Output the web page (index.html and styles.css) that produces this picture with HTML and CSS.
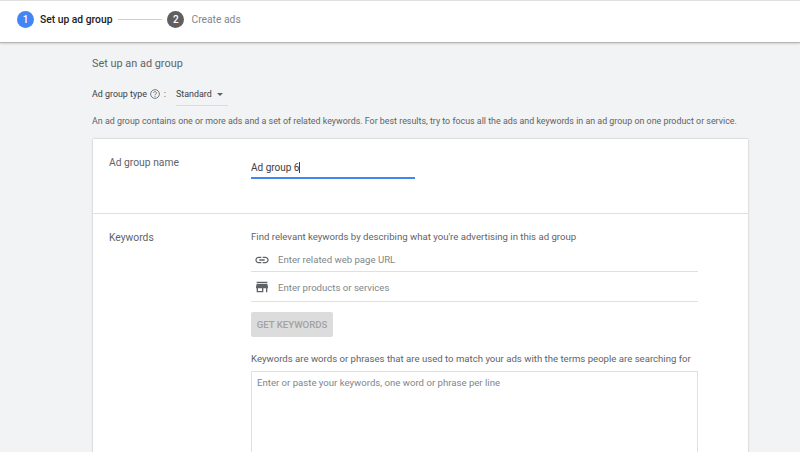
FILE: index.html
```html
<!DOCTYPE html>
<html lang="en">
<head>
<meta charset="utf-8">
<title>Set up ad group</title>
<link rel="stylesheet" href="styles.css">
</head>
<body>
<header class="stepper">
  <span class="step-num step-active">1</span>
  <span class="step-label step-label-active">Set up ad group</span>
  <span class="step-line"></span>
  <span class="step-num step-next">2</span>
  <span class="step-label">Create ads</span>
</header>
<main class="content">
  <h1 class="title">Set up an ad group</h1>
  <div class="type-row">
    <span class="type-label">Ad group type</span>
    <svg class="help" viewBox="0 0 24 24" width="10" height="10"><circle cx="12" cy="12" r="10.5" fill="none" stroke="#5f6368" stroke-width="2"/><path d="M8.6 9.5a3.4 3.4 0 1 1 5.6 2.6c-1.3 1-2.2 1.6-2.2 3.2" fill="none" stroke="#5f6368" stroke-width="2"/><rect x="11" y="17" width="2" height="2" fill="#5f6368"/></svg>
    <span class="colon">:</span>
    <span class="select"><span>Standard</span><span class="caret"></span></span>
  </div>
  <p class="desc">An ad group contains one or more ads and a set of related keywords. For best results, try to focus all the ads and keywords in an ad group on one product or service.</p>
  <section class="card">
    <div class="row row-name">
      <div class="row-label">Ad group name</div>
      <div class="name-field"><span class="name-value">Ad group 6</span><span class="cursor"></span></div>
    </div>
    <div class="row row-keywords">
      <div class="row-label">Keywords</div>
      <div class="kw-body">
        <p class="kw-text">Find relevant keywords by describing what you're advertising in this ad group</p>
        <div class="kw-input kw-url">
          <svg viewBox="0 0 24 24" width="16" height="16"><path fill="#5f6368" d="M3.9 12c0-1.71 1.39-3.1 3.1-3.1h4V7H7c-2.76 0-5 2.24-5 5s2.24 5 5 5h4v-1.9H7c-1.71 0-3.1-1.39-3.1-3.1zM8 13h8v-2H8v2zm9-6h-4v1.9h4c1.71 0 3.1 1.39 3.1 3.1s-1.39 3.1-3.1 3.1h-4V17h4c2.76 0 5-2.24 5-5s-2.24-5-5-5z"/></svg>
          <span>Enter related web page URL</span>
        </div>
        <div class="kw-input kw-prod">
          <svg viewBox="0 0 24 24" width="16" height="16"><path fill="#5f6368" d="M20 4H4v2h16V4zm1 10v-2l-1-5H4l-1 5v2h1v6h10v-6h4v6h2v-6h1zm-9 4H6v-4h6v4z"/></svg>
          <span>Enter products or services</span>
        </div>
        <div class="btn-disabled">GET KEYWORDS</div>
        <p class="kw-text kw-hint">Keywords are words or phrases that are used to match your ads with the terms people are searching for</p>
        <div class="textarea">Enter or paste your keywords, one word or phrase per line</div>
      </div>
    </div>
  </section>
</main>
</body>
</html>
```
FILE: styles.css
```css
html, body {
  margin: 0;
  height: 452px;
  overflow: hidden;
}
body {
  background: #f1f3f4;
  font-family: Roboto, "Liberation Sans", sans-serif;
  color: #5f6368;
  font-size: 10px;
}
.stepper {
  box-sizing: border-box;
  height: 43px;
  background: #fff;
  display: flex;
  align-items: center;
  padding: 0 0 4px 17px;
  border-top: 1px solid #e0e0e0;
  border-bottom: 1px solid #b4b4b4;
  box-shadow: 0 1px 2px rgba(0,0,0,.15);
}
.step-num {
  width: 17px;
  height: 17px;
  border-radius: 50%;
  color: #fff;
  font-size: 10px;
  font-weight: 500;
  display: flex;
  align-items: center;
  justify-content: center;
}
.step-active { background: #4285f4; }
.step-next { background: #5f5f5f; margin-right: 7px; }
.step-label { font-size: 10.3px; color: #80868b; }
.step-label-active { color: #202124; font-weight: 500; margin-left: 6px; }
.step-line {
  width: 44px;
  height: 1px;
  background: #cfcfcf;
  margin: 0 5px 0 6px;
}
.content {
  width: 655px;
  margin-left: 93px;
}
.title {
  margin: 14px 0 0 -1px;
  font-size: 10.9px;
  line-height: 14px;
  font-weight: 400;
  color: #5f6368;
}
.type-row {
  display: flex;
  align-items: flex-start;
  height: 25px;
  margin: 10px 0 0 -1px;
  color: #3c4043;
  font-size: 8.9px;
  line-height: 26px;
}
.help { margin: 8px 0 0 3px; }
.colon { margin: 0 10px 0 4px; }
.select {
  box-sizing: border-box;
  width: 52px;
  height: 25px;
  display: flex;
  align-items: flex-start;
  gap: 5px;
  border-bottom: 1px solid #dadce0;
}
.caret {
  border: 3px solid transparent;
  border-top: 3.5px solid #5f6368;
  border-bottom: 0;
  margin-top: 12px;
}
.desc {
  margin: 9px 0 0 -1px;
  font-size: 8.9px;
  line-height: 12px;
  white-space: nowrap;
}
.card {
  background: #fff;
  margin-top: 12px;
  box-shadow: 0 0 2px rgba(0,0,0,.25);
  height: 400px;
}
.row { display: flex; padding-left: 16px; }
.row-label {
  width: 142px;
  flex: none;
  font-size: 10.3px;
  color: #5f6368;
}
.row-name {
  height: 75px;
  padding-top: 17px;
  box-sizing: border-box;
  border-bottom: 1px solid #e0e0e0;
}
.name-field {
  width: 164px;
  height: 22px;
  box-sizing: border-box;
  margin-top: 1px;
  border-bottom: 2px solid #4285f4;
  font-size: 10px;
  color: #3c4043;
  padding-top: 5px;
  display: flex;
  align-items: flex-start;
}
.cursor {
  display: block;
  width: 1px;
  height: 11px;
  background: #3c4043;
}
.row-keywords { padding-top: 16px; }
.row-keywords .row-label { padding-top: 1px; }
.kw-body { width: 447px; }
.kw-text {
  margin: 0;
  font-size: 9.6px;
  line-height: 12px;
  padding-top: 1px;
  white-space: nowrap;
}
.kw-input {
  display: flex;
  align-items: center;
  gap: 8px;
  padding-left: 3px;
  border-bottom: 1px solid #e0e0e0;
  color: #80868b;
  font-size: 9.6px;
  box-sizing: border-box;
}
.kw-url { margin-top: 5px; height: 24px; }
.kw-prod { height: 30px; padding-top: 1px; }
.btn-disabled {
  box-sizing: border-box;
  width: 82px;
  height: 25px;
  margin-top: 10px;
  background: #dcdcdc;
  color: #a2a2a2;
  font-size: 9.6px;
  font-weight: 500;
  border-radius: 2px;
  display: flex;
  align-items: center;
  justify-content: center;
}
.kw-hint { margin-top: 15px; }
.textarea {
  box-sizing: border-box;
  margin-top: 6px;
  height: 120px;
  border: 1px solid #e0e0e0;
  padding: 5px;
  color: #80868b;
  font-size: 9.6px;
  line-height: 12px;
}
```
